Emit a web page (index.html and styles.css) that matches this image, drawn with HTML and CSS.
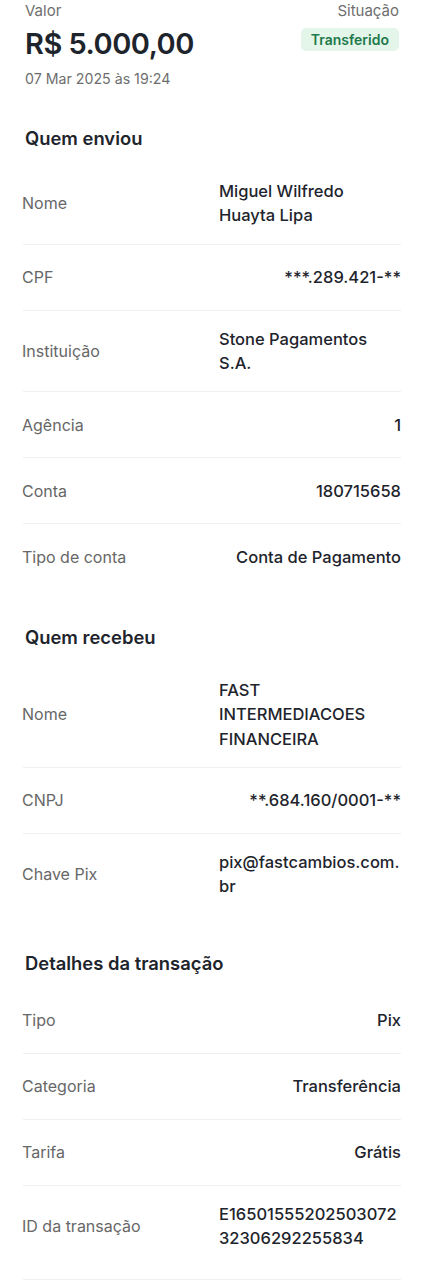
FILE: index.html
```html
<!DOCTYPE html>
<html lang="pt-BR">
<head>
<meta charset="utf-8">
<link rel="stylesheet" href="styles.css">
</head>
<body>
<main class="page">
  <header class="summary">
    <div class="summary-main">
      <span class="caption">Valor</span>
      <span class="amount">R$ 5.000,00</span>
      <span class="date">07 Mar 2025 às 19:24</span>
    </div>
    <div class="summary-status">
      <span class="caption">Situação</span>
      <span class="badge">Transferido</span>
    </div>
  </header>

  <section class="section">
    <h2 class="section-title">Quem enviou</h2>
    <div class="row"><span class="label">Nome</span><span class="value">Miguel Wilfredo Huayta Lipa</span></div>
    <div class="row"><span class="label">CPF</span><span class="value">***.289.421-**</span></div>
    <div class="row"><span class="label">Instituição</span><span class="value">Stone Pagamentos S.A.</span></div>
    <div class="row"><span class="label">Agência</span><span class="value">1</span></div>
    <div class="row"><span class="label">Conta</span><span class="value">180715658</span></div>
    <div class="row row-last"><span class="label">Tipo de conta</span><span class="value">Conta de Pagamento</span></div>
  </section>

  <section class="section">
    <h2 class="section-title">Quem recebeu</h2>
    <div class="row"><span class="label">Nome</span><span class="value">FAST INTERMEDIACOES FINANCEIRA</span></div>
    <div class="row"><span class="label">CNPJ</span><span class="value">**.684.160/0001-**</span></div>
    <div class="row row-last"><span class="label">Chave Pix</span><span class="value">pix@fastcambios.com.br</span></div>
  </section>

  <section class="section">
    <h2 class="section-title">Detalhes da transação</h2>
    <div class="row"><span class="label">Tipo</span><span class="value">Pix</span></div>
    <div class="row"><span class="label">Categoria</span><span class="value">Transferência</span></div>
    <div class="row"><span class="label">Tarifa</span><span class="value">Grátis</span></div>
    <div class="row row-tall"><span class="label">ID da transação</span><span class="value">E1650155520250307232306292255834</span></div>
  </section>
</main>
</body>
</html>
```

FILE: styles.css
```css
* { box-sizing: border-box; }

html, body {
  margin: 0;
  padding: 0;
  background: #ffffff;
}

body {
  font-family: Inter, "Noto Sans", "Liberation Sans", sans-serif;
  color: #1e242c;
}

.page {
  padding: 0 23px 0 22px;
}

.summary {
  display: flex;
  justify-content: space-between;
  padding: 1px 2px 0 3px;
}

.summary-main,
.summary-status {
  display: flex;
  flex-direction: column;
}

.summary-status {
  align-items: flex-end;
}

.caption {
  font-size: 15px;
  line-height: 20px;
  color: #6e6e6e;
}

.amount {
  margin-top: 5px;
  font-size: 29px;
  line-height: 36px;
  font-weight: 600;
  color: #1e242c;
  letter-spacing: -0.5px;
}

.date {
  margin-top: 7px;
  font-size: 14.2px;
  line-height: 20px;
  color: #6e6e6e;
}

.badge {
  margin-top: 7px;
  height: 23px;
  padding: 0 10px;
  display: flex;
  align-items: center;
  border-radius: 5px;
  background: #e4f5ea;
  color: #217a4b;
  font-size: 14px;
  font-weight: 600;
}

.section {
  padding-top: 37px;
}

.section + .section {
  padding-top: 36px;
}

.section-title {
  margin: 0 0 13px;
  padding-left: 3px;
  font-size: 18.4px;
  line-height: 24px;
  font-weight: 600;
  color: #1e242c;
}

.row {
  display: flex;
  align-items: center;
  justify-content: space-between;
  gap: 16px;
  min-height: 66px;
  padding: 16px 0;
  border-bottom: 1px solid #efefef;
  margin-left: 1px;
}

.row-last {
  border-bottom: none;
  min-height: 65px;
}

.row-tall {
  padding-bottom: 29px;
}

.label {
  flex: 1 1 auto;
  margin-left: -1px;
  font-size: 16px;
  line-height: 24.3px;
  color: #676767;
}

.value {
  flex: 0 1 auto;
  max-width: 182px;
  font-size: 16.5px;
  line-height: 24.3px;
  font-weight: 500;
  color: #1e242c;
  text-align: left;
  overflow-wrap: anywhere;
}
```
